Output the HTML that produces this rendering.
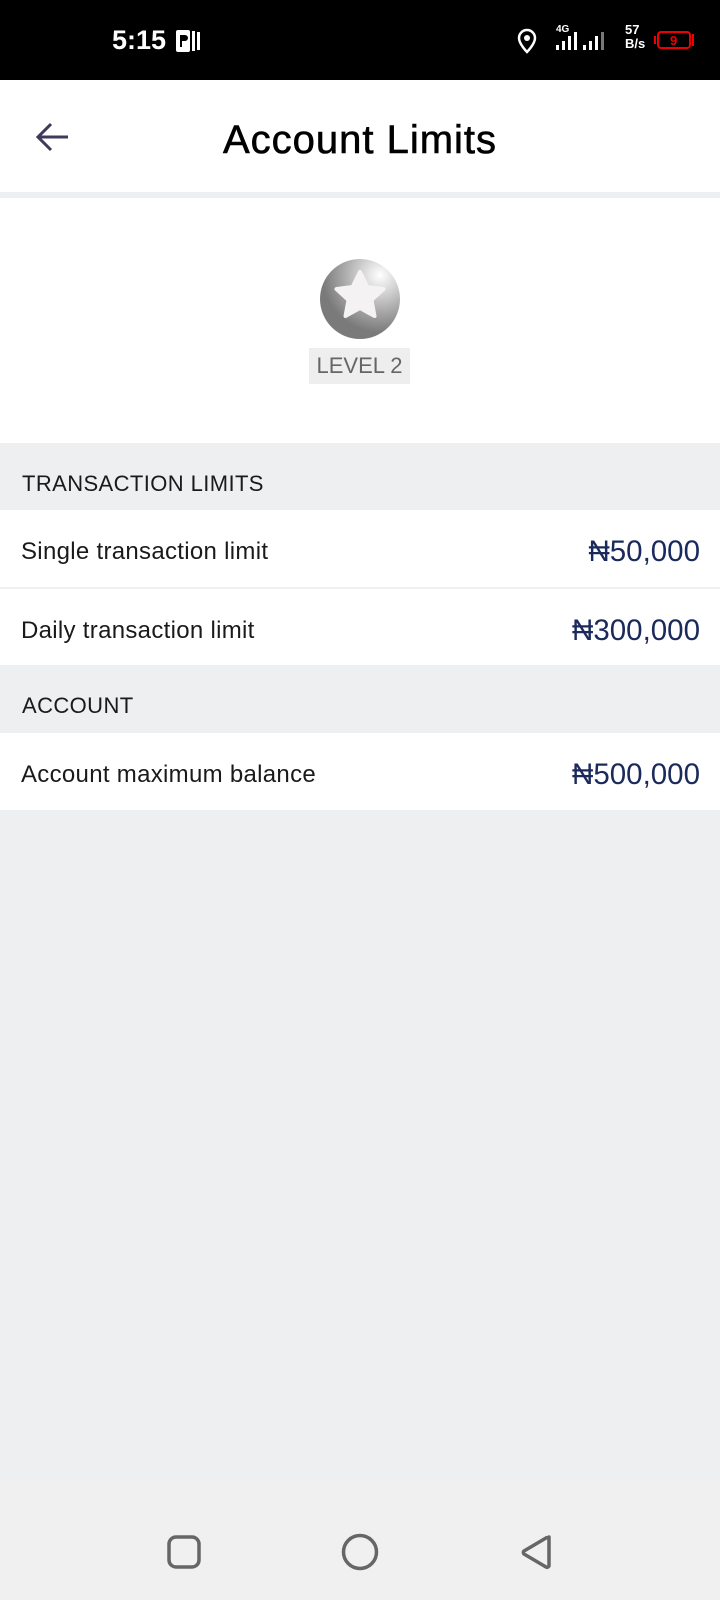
<!DOCTYPE html>
<html><head><meta charset="utf-8"><style>
*{margin:0;padding:0;box-sizing:border-box}
body{width:720px;height:1600px;background:#eeeff1;font-family:"Liberation Sans",sans-serif;position:relative;overflow:hidden}
.a{position:absolute}
.row{position:absolute;left:0;width:720px;background:#fff;height:77px}
.row .l{position:absolute;left:21px;top:28px;font-size:24px;letter-spacing:0.3px;color:#1a1a1a}
.row .r{position:absolute;right:20px;top:25px;font-size:29.5px;color:#1b2a5c}
.sec{position:absolute;left:22px;font-size:22px;letter-spacing:0.4px;color:#1a1a1a}
</style></head><body>
<div class="a" style="left:0;top:0;width:720px;height:80px;background:#000"></div>
<div class="a" style="left:112px;top:25px;color:#fff;font-size:27px;font-weight:bold">5:15</div>
<svg class="a" style="left:175px;top:28px" width="26" height="26" viewBox="0 0 26 26"><rect x="1" y="2" width="14" height="22" rx="2" fill="#fff"/><path d="M5 7h5a3 3 0 0 1 0 6H7v6H5z" fill="#000"/><rect x="17" y="3" width="3" height="20" fill="#fff"/><rect x="22" y="4" width="3" height="18" fill="#fff"/></svg>
<svg class="a" style="left:516px;top:28px" width="22" height="26" viewBox="0 0 22 26"><path d="M11 2a8 8 0 0 1 8 8c0 6-8 14-8 14S3 16 3 10a8 8 0 0 1 8-8z" fill="none" stroke="#fff" stroke-width="2.5"/><circle cx="11" cy="10" r="3" fill="#fff"/></svg>
<div class="a" style="left:556px;top:24px;color:#fff;font-size:10px;font-weight:bold">4G</div>
<svg class="a" style="left:556px;top:30px" width="60" height="22" viewBox="0 0 60 22"><g fill="#fff"><rect x="0" y="15" width="3" height="5"/><rect x="6" y="11" width="3" height="9"/><rect x="12" y="6" width="3" height="14"/><rect x="18" y="2" width="3" height="18"/><rect x="27" y="15" width="3" height="5"/><rect x="33" y="11" width="3" height="9"/><rect x="39" y="6" width="3" height="14"/></g><rect x="45" y="2" width="3" height="18" fill="#777"/></svg>
<div class="a" style="left:625px;top:23px;color:#fff;font-size:13px;font-weight:bold;line-height:14px">57<br>B/s</div>
<svg class="a" style="left:654px;top:30px" width="42" height="20" viewBox="0 0 42 20"><rect x="0" y="6" width="2" height="8" fill="#e00"/><rect x="4" y="2" width="32" height="16" rx="3" fill="none" stroke="#e00" stroke-width="2"/><rect x="38" y="4" width="2" height="12" fill="#e00"/><text x="16" y="15" font-size="13" font-weight="bold" fill="#e00" font-family="Liberation Sans">9</text></svg>
<div class="a" style="left:0;top:80px;width:720px;height:112px;background:#fff"></div>
<svg class="a" style="left:34px;top:120px" width="36" height="34" viewBox="0 0 36 34"><path d="M34 17H4M17 4L4 17l13 13" fill="none" stroke="#3d3a5a" stroke-width="3"/></svg>
<div class="a" style="left:0;top:118px;width:720px;text-align:center;font-size:40px;letter-spacing:1px;color:#000;-webkit-text-stroke:0.6px #000">Account Limits</div>
<div class="a" style="left:0;top:198px;width:720px;height:245px;background:#fff"></div>
<svg class="a" style="left:319px;top:258px" width="82" height="82" viewBox="0 0 82 82"><defs><radialGradient id="g" cx="0.75" cy="0.2" r="0.9"><stop offset="0" stop-color="#fff"/><stop offset="0.5" stop-color="#aaa"/><stop offset="0.8" stop-color="#7a7a7a"/></radialGradient></defs><circle cx="41" cy="41" r="40" fill="url(#g)"/><path d="M41 14l7.5 15 16 2-12 11 3 16-14.5-8-14.5 8 3-16-12-11 16-2z" fill="#f4f2f2" stroke="#f4f2f2" stroke-width="4" stroke-linejoin="round"/></svg>
<div class="a" style="left:309px;top:348px;width:101px;height:36px;background:#eee;color:#666;font-size:22px;text-align:center;line-height:36px">LEVEL 2</div>
<div class="sec" style="top:471px">TRANSACTION LIMITS</div>
<div class="row" style="top:510px"><div class="l">Single transaction limit</div><div class="r">₦50,000</div></div>
<div class="row" style="top:589px;height:76px"><div class="l">Daily transaction limit</div><div class="r">₦300,000</div></div>
<div class="sec" style="top:693px">ACCOUNT</div>
<div class="row" style="top:733px"><div class="l">Account maximum balance</div><div class="r">₦500,000</div></div>
<div class="a" style="left:0;top:1480px;width:720px;height:120px;background:#f0f0f0"></div>
<svg class="a" style="left:0;top:1520px" width="720" height="64"><g fill="none" stroke="#666" stroke-width="3.5" stroke-linejoin="round"><rect x="169" y="17" width="30" height="30" rx="7"/><circle cx="360" cy="32" r="16.5"/><path d="M549 17v28a2 2 0 0 1-3 2l-22-13a2 2 0 0 1 0-3l22-13a2 2 0 0 1 3 1z"/></g></svg>
</body></html>
